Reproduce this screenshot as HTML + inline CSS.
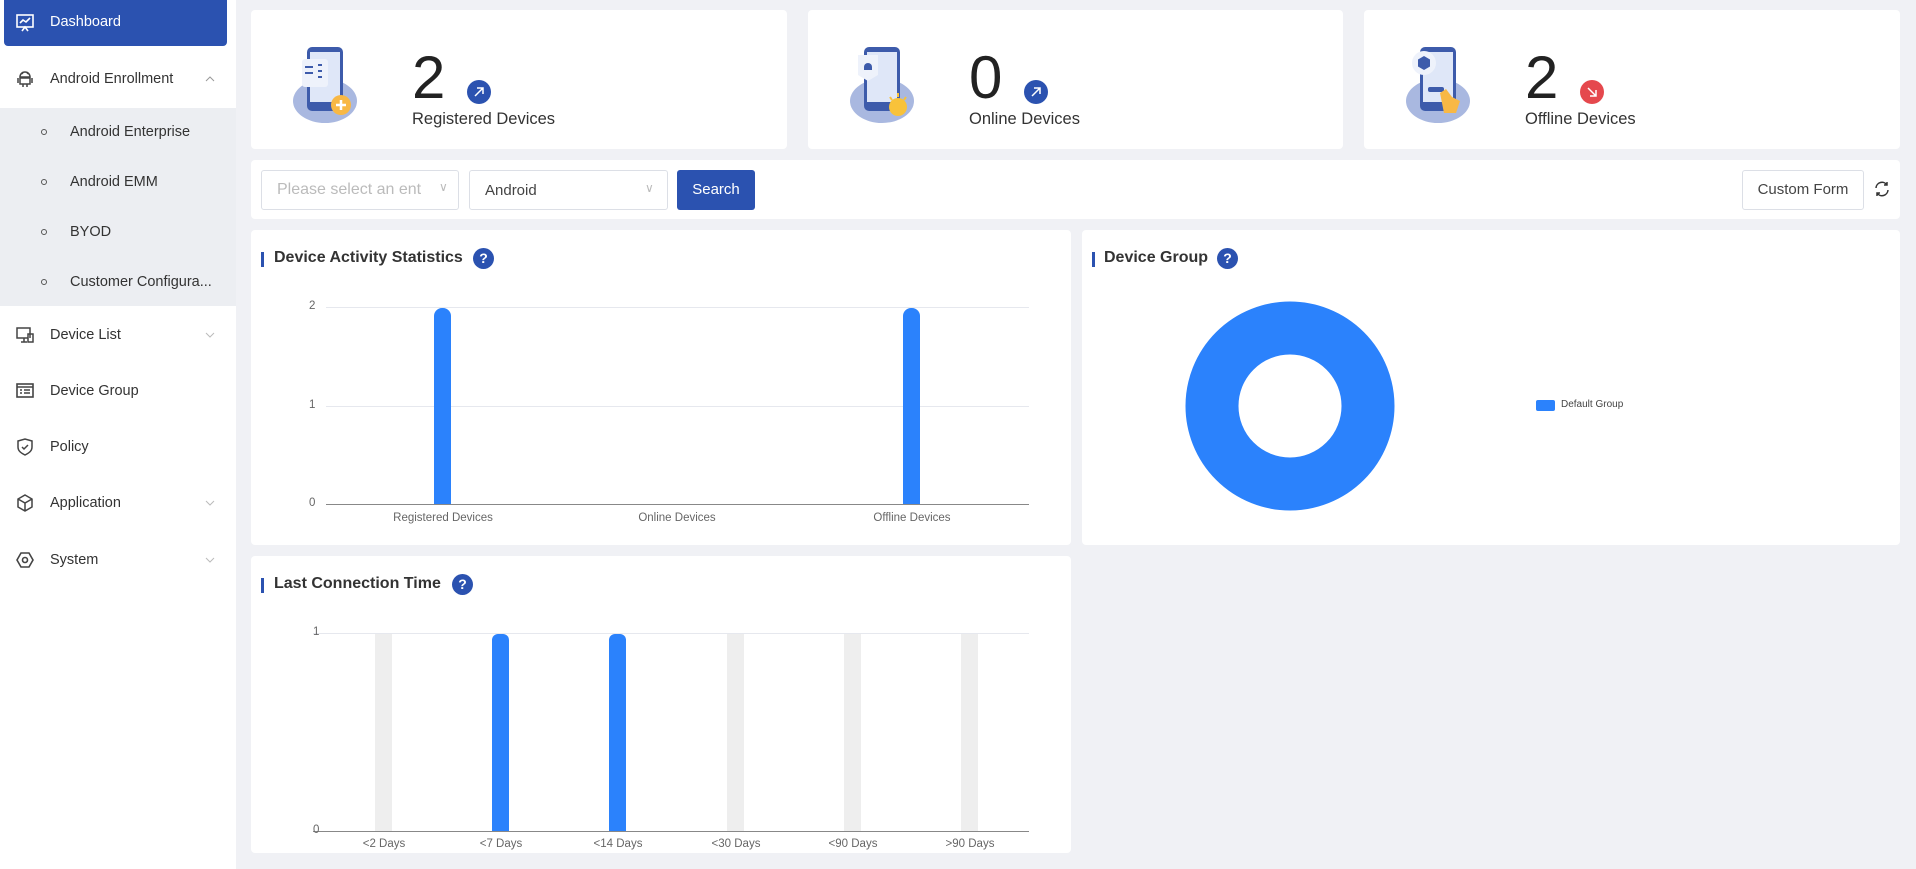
<!DOCTYPE html>
<html><head><meta charset="utf-8"><style>
*{box-sizing:border-box;margin:0;padding:0}
body{width:1916px;height:869px;overflow:hidden;background:#f0f1f5;font-family:"Liberation Sans",sans-serif;position:relative;color:#333}
.abs{position:absolute}
.side{left:0;top:0;width:236px;height:869px;background:#fff}
.sub{left:0;top:108px;width:236px;height:198px;background:#eceef2}
.mi{position:absolute;left:50px;font-size:14.5px;color:#333;transform:translateY(-50%);white-space:nowrap}
.si{position:absolute;left:70px;font-size:14.5px;color:#333;transform:translateY(-50%);white-space:nowrap}
.dot{position:absolute;left:41px;width:6px;height:6px;border:1.5px solid #555;border-radius:50%;transform:translateY(-50%)}
.ic{position:absolute;left:15px;transform:translateY(-50%)}
.chev{position:absolute;left:204px;transform:translateY(-50%)}
.card{position:absolute;background:#fff;border-radius:4px}
.num{position:absolute;font-size:60px;line-height:60px;color:#222;top:38px}
.lbl{position:absolute;font-size:16.5px;color:#333;top:100px;white-space:nowrap}
.arr{position:absolute;top:70px;width:24px;height:24px;border-radius:50%;background:#2b52b0}
.title{position:absolute;font-size:16px;font-weight:bold;color:#333;white-space:nowrap}
.bar{position:absolute;left:10px;width:3px;height:15px;background:#2b52b0}
.q{position:absolute;width:21px;height:21px;border-radius:50%;background:#2b52b0;color:#fff;font-size:14px;text-align:center;line-height:21px;font-weight:bold}
.ax{position:absolute;font-size:11.5px;color:#666;white-space:nowrap}
</style></head><body>
<div class="abs side"></div>
<div class="abs sub"></div>
<div class="abs" style="left:4px;top:0;width:223px;height:46px;background:#2b52b0;border-radius:0 0 4px 4px"></div>
<svg class="abs" style="left:15px;top:13px" width="20" height="20" viewBox="0 0 20 20" fill="none" stroke="#fff" stroke-width="1.6"><rect x="2" y="2" width="16" height="12"/><path d="M5 10l3-3 3 2 4-4M7 18l3-4 3 4"/></svg>
<div class="abs" style="left:50px;top:14px;font-size:14.5px;color:#fff">Dashboard</div>

<svg class="ic" style="top:79px" width="20" height="20" viewBox="0 0 20 20" fill="none" stroke="#444" stroke-width="1.5"><path d="M5 8a5 5 0 0 1 10 0zM5 9h10v6H5zM3 9v5M17 9v5M8 15v3M12 15v3M7 3l1 2M13 3l-1 2"/></svg>
<div class="mi" style="top:79px">Android Enrollment</div>
<svg class="chev" style="top:79px" width="12" height="8" viewBox="0 0 12 8" fill="none" stroke="#999"><path d="M2 6l4-4 4 4"/></svg>
<div class="dot" style="top:132px"></div><div class="si" style="top:132px">Android Enterprise</div>
<div class="dot" style="top:182px"></div><div class="si" style="top:182px">Android EMM</div>
<div class="dot" style="top:232px"></div><div class="si" style="top:232px">BYOD</div>
<div class="dot" style="top:282px"></div><div class="si" style="top:282px">Customer Configura...</div>

<svg class="ic" style="top:335px" width="20" height="20" viewBox="0 0 20 20" fill="none" stroke="#444" stroke-width="1.5"><path d="M15 13V3H2v10h11M6 17h6M9 13v4"/><rect x="13" y="9" width="5" height="8"/></svg>
<div class="mi" style="top:335px">Device List</div>
<svg class="chev" style="top:335px" width="12" height="8" viewBox="0 0 12 8" fill="none" stroke="#bbb"><path d="M2 2l4 4 4-4"/></svg>
<svg class="ic" style="top:391px" width="20" height="20" viewBox="0 0 20 20" fill="none" stroke="#444" stroke-width="1.6"><rect x="2" y="3" width="16" height="13"/><path d="M2 6h16M5 9h2M9 9h6M5 12h2M9 12h6"/></svg>
<div class="mi" style="top:391px">Device Group</div>
<svg class="ic" style="top:447px" width="20" height="20" viewBox="0 0 20 20" fill="none" stroke="#444" stroke-width="1.5"><path d="M3 4l7-2 7 2v6c0 4-3 6-7 8-4-2-7-4-7-8z"/><path d="M7 10l2 2 4-4"/></svg>
<div class="mi" style="top:447px">Policy</div>
<svg class="ic" style="top:503px" width="20" height="20" viewBox="0 0 20 20" fill="none" stroke="#444" stroke-width="1.5"><path d="M10 2l7 4v8l-7 4-7-4V6zM3 6l7 4 7-4M10 10v8"/></svg>
<div class="mi" style="top:503px">Application</div>
<svg class="chev" style="top:503px" width="12" height="8" viewBox="0 0 12 8" fill="none" stroke="#bbb"><path d="M2 2l4 4 4-4"/></svg>
<svg class="ic" style="top:560px" width="20" height="20" viewBox="0 0 20 20" fill="none" stroke="#444" stroke-width="1.6"><path d="M6 3h8l4 7-4 7H6l-4-7z"/><circle cx="10" cy="10" r="2.5"/></svg>
<div class="mi" style="top:560px">System</div>
<svg class="chev" style="top:560px" width="12" height="8" viewBox="0 0 12 8" fill="none" stroke="#bbb"><path d="M2 2l4 4 4-4"/></svg>

<div class="card" style="left:251px;top:10px;width:536px;height:139px">
 <svg class="abs" style="left:38px;top:33px" width="80" height="82" viewBox="0 0 80 82"><ellipse cx="36" cy="58" rx="32" ry="22" fill="#a9b8e0"/><rect x="18" y="4" width="36" height="64" rx="5" fill="#3d5bab"/><rect x="21" y="9" width="30" height="50" fill="#dfe7f8"/><rect x="13" y="16" width="26" height="28" rx="3" fill="#eef2fb"/><path d="M16 24h8M16 30h8M29 22h4M29 28h4M29 34h4" stroke="#3d5bab" stroke-width="2"/><circle cx="52" cy="62" r="10" fill="#f8b845"/><path d="M47 62h10M52 57v10" stroke="#fff" stroke-width="2.5"/></svg>
 <div class="num" style="left:161px">2</div>
 <div class="arr" style="left:216px"><svg width="24" height="24" viewBox="0 0 24 24" fill="none" stroke="#fff" stroke-width="1.5"><path d="M8 16l8-8M10 8h6v6"/></svg></div>
 <div class="lbl" style="left:161px">Registered Devices</div>
</div>
<div class="card" style="left:808px;top:10px;width:535px;height:139px">
 <svg class="abs" style="left:38px;top:33px" width="80" height="82" viewBox="0 0 80 82"><ellipse cx="36" cy="58" rx="32" ry="22" fill="#a9b8e0"/><rect x="18" y="4" width="36" height="64" rx="5" fill="#3d5bab"/><rect x="21" y="9" width="30" height="50" fill="#dfe7f8"/><path d="M12 12h20v20l-10 6-10-6z" fill="#eef2fb"/><path d="M18 24a4 4 0 0 1 8 0v3h-8z" fill="#3d5bab"/><circle cx="52" cy="64" r="9" fill="#f8c23a"/><path d="M52 50v4M44 54l2 3M60 54l-2 3" stroke="#f8c23a" stroke-width="2"/></svg>
 <div class="num" style="left:161px">0</div>
 <div class="arr" style="left:216px"><svg width="24" height="24" viewBox="0 0 24 24" fill="none" stroke="#fff" stroke-width="1.5"><path d="M8 16l8-8M10 8h6v6"/></svg></div>
 <div class="lbl" style="left:161px">Online Devices</div>
</div>
<div class="card" style="left:1364px;top:10px;width:536px;height:139px">
 <svg class="abs" style="left:38px;top:33px" width="80" height="82" viewBox="0 0 80 82"><ellipse cx="36" cy="58" rx="32" ry="22" fill="#a9b8e0"/><rect x="18" y="4" width="36" height="64" rx="5" fill="#3d5bab"/><rect x="21" y="9" width="30" height="50" fill="#dfe7f8"/><circle cx="22" cy="20" r="12" fill="#eef2fb"/><path d="M22 13l6 3.5v7L22 27l-6-3.5v-7z" fill="#3d5bab"/><rect x="26" y="44" width="16" height="5" rx="2" fill="#3d5bab"/><path d="M38 50l6-4 6 8 8 4-4 12H42z" fill="#f8b845"/></svg>
 <div class="num" style="left:161px">2</div>
 <div class="arr" style="left:216px;background:#e5484d"><svg width="24" height="24" viewBox="0 0 24 24" fill="none" stroke="#fff" stroke-width="1.5"><path d="M8 8l8 8M16 10v6h-6"/></svg></div>
 <div class="lbl" style="left:161px">Offline Devices</div>
</div>

<div class="card" style="left:251px;top:160px;width:1649px;height:59px">
 <div class="abs" style="left:10px;top:10px;width:198px;height:40px;border:1px solid #dcdfe6;border-radius:3px;font-size:16px;color:#bbb;padding:10px 0 0 15px;white-space:nowrap">Please select an ent<span style="position:absolute;left:177px;top:9px;color:#bbb;font-size:12px">&#8744;</span></div>
 <div class="abs" style="left:218px;top:10px;width:199px;height:40px;border:1px solid #dcdfe6;border-radius:3px;font-size:15px;color:#444;padding:11px 0 0 15px">Android<span style="position:absolute;left:175px;top:10px;color:#bbb;font-size:12px">&#8744;</span></div>
 <div class="abs" style="left:426px;top:10px;width:78px;height:40px;background:#2b52b0;border-radius:3px;color:#fff;font-size:15px;text-align:center;line-height:40px">Search</div>
 <div class="abs" style="left:1491px;top:10px;width:122px;height:40px;border:1px solid #dcdfe6;border-radius:3px;font-size:15px;color:#444;text-align:center;line-height:38px">Custom Form</div>
 <svg class="abs" style="left:1622px;top:20px" width="18" height="18" viewBox="0 0 18 18" fill="none" stroke="#333" stroke-width="1.5"><path d="M3 8a6 6 0 0 1 11-3M15 10a6 6 0 0 1-11 3M14 2v3h-3M4 16v-3h3"/></svg>
</div>

<div class="card" style="left:251px;top:230px;width:820px;height:315px">
 <div class="bar" style="top:22px"></div>
 <div class="title" style="left:23px;top:19px">Device Activity Statistics</div>
 <div class="q" style="left:222px;top:18px">?</div>
 <div class="abs" style="left:75px;top:77px;width:703px;height:1px;background:#e6e8ee"></div>
 <div class="abs" style="left:75px;top:176px;width:703px;height:1px;background:#e6e8ee"></div>
 <div class="abs" style="left:75px;top:274px;width:703px;height:1px;background:#888"></div>
 <div class="ax" style="left:58px;top:70px">2</div>
 <div class="ax" style="left:58px;top:169px">1</div>
 <div class="ax" style="left:58px;top:267px">0</div>
 <div class="abs" style="left:183px;top:78px;width:17px;height:196px;background:#2b82fc;border-radius:8px 8px 0 0"></div>
 <div class="abs" style="left:652px;top:78px;width:17px;height:196px;background:#2b82fc;border-radius:8px 8px 0 0"></div>
 <div class="ax" style="left:132px;top:282px;width:120px;text-align:center">Registered Devices</div>
 <div class="ax" style="left:366px;top:282px;width:120px;text-align:center">Online Devices</div>
 <div class="ax" style="left:601px;top:282px;width:120px;text-align:center">Offline Devices</div>
</div>

<div class="card" style="left:1082px;top:230px;width:818px;height:315px">
 <div class="bar" style="top:22px"></div>
 <div class="title" style="left:22px;top:19px">Device Group</div>
 <div class="q" style="left:135px;top:18px">?</div>
 <svg class="abs" style="left:103px;top:70px" width="210" height="212"><circle cx="105" cy="106" r="78" fill="none" stroke="#2b82fc" stroke-width="53"/></svg>
 <div class="abs" style="left:454px;top:170px;width:19px;height:11px;background:#2b82fc;border-radius:2px"></div>
 <div class="abs" style="left:479px;top:169px;font-size:10px;color:#444">Default Group</div>
</div>

<div class="card" style="left:251px;top:556px;width:820px;height:297px">
 <div class="bar" style="top:22px"></div>
 <div class="title" style="left:23px;top:19px">Last Connection Time</div>
 <div class="q" style="left:201px;top:18px">?</div>
 <div class="abs" style="left:62px;top:77px;width:716px;height:1px;background:#e6e8ee"></div>
 <div class="abs" style="left:62px;top:275px;width:716px;height:1px;background:#888"></div>
 <div class="ax" style="left:62px;top:70px">1</div>
 <div class="ax" style="left:62px;top:268px">0</div>
 <div class="abs" style="left:124px;top:78px;width:17px;height:197px;background:#eeeeee"></div>
 <div class="abs" style="left:241px;top:78px;width:17px;height:197px;background:#2b82fc;border-radius:6px 6px 0 0"></div>
 <div class="abs" style="left:358px;top:78px;width:17px;height:197px;background:#2b82fc;border-radius:6px 6px 0 0"></div>
 <div class="abs" style="left:476px;top:78px;width:17px;height:197px;background:#eeeeee"></div>
 <div class="abs" style="left:593px;top:78px;width:17px;height:197px;background:#eeeeee"></div>
 <div class="abs" style="left:710px;top:78px;width:17px;height:197px;background:#eeeeee"></div>
 <div class="ax" style="left:93px;top:282px;width:80px;text-align:center">&lt;2 Days</div>
 <div class="ax" style="left:210px;top:282px;width:80px;text-align:center">&lt;7 Days</div>
 <div class="ax" style="left:327px;top:282px;width:80px;text-align:center">&lt;14 Days</div>
 <div class="ax" style="left:445px;top:282px;width:80px;text-align:center">&lt;30 Days</div>
 <div class="ax" style="left:562px;top:282px;width:80px;text-align:center">&lt;90 Days</div>
 <div class="ax" style="left:679px;top:282px;width:80px;text-align:center">&gt;90 Days</div>
</div>
</body></html>
